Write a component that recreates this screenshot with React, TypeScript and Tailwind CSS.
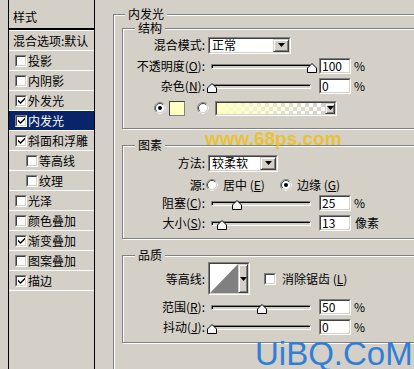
import type { ReactNode } from 'react'

const layers = [
  { label: '投影', checked: false },
  { label: '内阴影', checked: false },
  { label: '外发光', checked: true },
  { label: '内发光', checked: true, active: true },
  { label: '斜面和浮雕', checked: true },
  { label: '等高线', checked: false, sub: true },
  { label: '纹理', checked: false, sub: true },
  { label: '光泽', checked: false },
  { label: '颜色叠加', checked: false },
  { label: '渐变叠加', checked: true },
  { label: '图案叠加', checked: false },
  { label: '描边', checked: true },
]

function CheckBox({ checked }: { checked?: boolean }) {
  return (
    <span className="w-[12px] h-[12px] shrink-0 flex border border-t-[#808080] border-l-[#808080] border-r-white border-b-white">
      <span className="flex-1 flex items-center justify-center bg-white border border-t-[#404040] border-l-[#404040] border-r-[#d4d0c8] border-b-[#d4d0c8]">
        {checked && (
          <svg width="7" height="7" viewBox="0 0 7 7">
            <path d="M0 2.5 L2.5 5 L7 0.5 L7 2.5 L2.5 7 L0 4.5 Z" fill="#000" />
          </svg>
        )}
      </span>
    </span>
  )
}

function Radio({ on }: { on?: boolean }) {
  return (
    <svg width="12" height="12" viewBox="0 0 12 12" className="shrink-0">
      <circle cx="6" cy="6" r="5.5" fill="#fff" stroke="#808080" />
      <path d="M9.9 2.1A5.5 5.5 0 0 1 2.1 9.9" fill="none" stroke="#fff" />
      <path d="M2.8 9.2A4.5 4.5 0 0 1 9.2 2.8" fill="none" stroke="#404040" />
      <path d="M9.2 2.8A4.5 4.5 0 0 1 2.8 9.2" fill="none" stroke="#d4d0c8" />
      {on && <circle cx="6" cy="6" r="2" fill="#000" />}
    </svg>
  )
}

function Arrow() {
  return (
    <svg width="7" height="4" viewBox="0 0 7 4">
      <path d="M0 0 H7 L3.5 4 Z" fill="#000" />
    </svg>
  )
}

function Sunken({ className, children }: { className: string; children: ReactNode }) {
  return (
    <div className={`flex shrink-0 border border-t-[#808080] border-l-[#808080] border-r-white border-b-white ${className}`}>
      <div className="flex-1 flex bg-white border border-t-[#404040] border-l-[#404040] border-r-[#d4d0c8] border-b-[#d4d0c8]">
        {children}
      </div>
    </div>
  )
}

function DropBtn({ className }: { className: string }) {
  return (
    <span className={`h-full flex items-center justify-center bg-[#d4d0c8] border border-t-[#d4d0c8] border-l-[#d4d0c8] border-r-[#404040] border-b-[#404040] shadow-[inset_1px_1px_0_#fff,inset_-1px_-1px_0_#808080] ${className}`}>
      <Arrow />
    </span>
  )
}

function Select({ text, className }: { text: string; className: string }) {
  return (
    <Sunken className={`ml-[3px] h-[17px] ${className}`}>
      <span className="flex-1 flex items-center pl-[2px]">{text}</span>
      <DropBtn className="w-[16px]" />
    </Sunken>
  )
}

function Slider({ pos }: { pos: number }) {
  return (
    <div className="relative ml-[6px] w-[100px] h-[5px] shrink-0 border border-t-[#808080] border-l-[#808080] border-r-white border-b-white">
      <div className="h-full border-t border-l border-black bg-[#d4d0c8]" />
      <svg width="10" height="10" viewBox="0 0 10 10" className="absolute top-[-2px]" style={{ left: pos - 5.5 }}>
        <path d="M5 0.5 L9.5 5 V9.5 H0.5 V5 Z" fill="#f4f4f4" stroke="#000" />
      </svg>
    </div>
  )
}

function NumBox({ value }: { value: string }) {
  return (
    <Sunken className="ml-[8px] w-[32px] h-[16px]">
      <span className="flex-1 flex items-center pl-[1px]">{value}</span>
    </Sunken>
  )
}

function Label({ children }: { children: ReactNode }) {
  return <span className="w-[82px] shrink-0 text-right whitespace-nowrap">{children}</span>
}

function Group({ title, className, children }: { title: string; className: string; children: ReactNode }) {
  return (
    <div className={`relative shrink-0 border border-[#808080] shadow-[inset_1px_1px_0_#fff,1px_1px_0_#fff] ${className}`}>
      <span className="absolute left-[12px] top-[-7px] px-[3px] bg-[#d4d0c8] leading-[12px]">{title}</span>
      {children}
    </div>
  )
}

export default function App() {
  return (
    <div className="relative w-[414px] h-[369px] overflow-hidden bg-[#d4d0c8] text-black text-[12px] leading-none font-['Noto_Sans_CJK_SC',sans-serif] flex items-start">
      <aside className="ml-[8px] w-[87px] h-[369px] shrink-0 flex flex-col border-l border-r border-black">
        <div className="h-[30px] pt-[6px] pl-[4px] flex items-center border-b-2 border-black">样式</div>
        <div className="h-[21px] pl-[4px] flex items-center border-t border-b border-white whitespace-nowrap">混合选项:默认</div>
        {layers.map((l) => (
          <div
            key={l.label}
            className={`h-[20px] flex items-center border-b border-white ${l.sub ? 'pl-[17px]' : 'pl-[6px]'} ${l.active ? 'bg-[#0a246a] text-white' : ''}`}
          >
            <CheckBox checked={l.checked} />
            <span className="ml-[1px]">{l.label}</span>
          </div>
        ))}
      </aside>

      <div className="relative ml-[18px] mt-[14px] w-[340px] h-[400px] shrink-0 pl-[8px] pt-[13px] flex flex-col border border-[#808080] shadow-[inset_1px_1px_0_#fff,1px_1px_0_#fff]">
        <span className="absolute left-[11px] top-[-7px] px-[3px] bg-[#d4d0c8] leading-[12px]">内发光</span>

        <Group title="结构" className="w-[320px] h-[101px] pt-[7px]">
          <div className="h-[18px] flex items-center">
            <Label>混合模式:</Label>
            <Select text="正常" className="w-[83px]" />
          </div>
          <div className="mt-[3px] h-[18px] flex items-center">
            <Label>不透明度(<u>O</u>):</Label>
            <Slider pos={100} />
            <NumBox value="100" />
            <span className="ml-[3px]">%</span>
          </div>
          <div className="mt-[2px] h-[18px] flex items-center">
            <Label>杂色(<u>N</u>):</Label>
            <Slider pos={0} />
            <NumBox value="0" />
            <span className="ml-[3px]">%</span>
          </div>
          <div className="mt-[4px] h-[18px] flex items-center">
            <span className="ml-[31px]"><Radio on /></span>
            <span className="ml-[3px] w-[16px] h-[15px] bg-[#ffffc4] border border-t-[#404040] border-l-[#404040] border-r-[#808080] border-b-[#808080]" />
            <span className="ml-[12px]"><Radio /></span>
            <Sunken className="ml-[6px] w-[122px] h-[15px]">
              <svg width="106" height="11" className="flex-1 h-full">
                <defs>
                  <pattern id="chk" width="8" height="8" patternUnits="userSpaceOnUse">
                    <rect width="8" height="8" fill="#fff" />
                    <rect width="4" height="4" fill="#d0d0d0" />
                    <rect x="4" y="4" width="4" height="4" fill="#d0d0d0" />
                  </pattern>
                  <linearGradient id="fade" x1="0" x2="1" y1="0" y2="0">
                    <stop offset="0" stopColor="#ffffc4" stopOpacity="1" />
                    <stop offset="1" stopColor="#ffffc4" stopOpacity="0" />
                  </linearGradient>
                </defs>
                <rect width="100%" height="100%" fill="url(#chk)" />
                <rect width="100%" height="100%" fill="url(#fade)" />
              </svg>
              <DropBtn className="w-[10px]" />
            </Sunken>
          </div>
        </Group>

        <Group title="图素" className="mt-[16px] w-[320px] h-[94px] pt-[8px]">
          <div className="h-[18px] flex items-center">
            <Label>方法:</Label>
            <Select text="较柔软" className="w-[70px]" />
          </div>
          <div className="mt-[4px] h-[18px] flex items-center">
            <Label>源:</Label>
            <span className="ml-[1px] w-[74px] flex items-center">
              <Radio />
              <span className="ml-[5px]">居中 (<u>E</u>)</span>
            </span>
            <Radio on />
            <span className="ml-[5px]">边缘 (<u>G</u>)</span>
          </div>
          <div className="h-[18px] flex items-center">
            <Label>阻塞(<u>C</u>):</Label>
            <Slider pos={25} />
            <NumBox value="25" />
            <span className="ml-[3px]">%</span>
          </div>
          <div className="mt-[2px] h-[18px] flex items-center">
            <Label>大小(<u>S</u>):</Label>
            <Slider pos={10} />
            <NumBox value="13" />
            <span className="ml-[4px]">像素</span>
          </div>
        </Group>

        <Group title="品质" className="mt-[16px] w-[320px] h-[88px] pt-[6px]">
          <div className="h-[33px] flex items-center">
            <Label>等高线:</Label>
            <Sunken className="ml-[3px] w-[42px] h-[33px]">
              <svg width="28" height="29" viewBox="0 0 28 29" className="shrink-0">
                <rect width="28" height="29" fill="#fff" />
                <path d="M0 29 L28 0 L28 29 Z" fill="#808080" />
              </svg>
              <DropBtn className="w-[10px]" />
            </Sunken>
            <span className="ml-[14px]"><CheckBox /></span>
            <span className="ml-[6px]">消除锯齿 (<u>L</u>)</span>
          </div>
          <div className="mt-[3px] h-[18px] flex items-center">
            <Label>范围(<u>R</u>):</Label>
            <Slider pos={50} />
            <NumBox value="50" />
            <span className="ml-[3px]">%</span>
          </div>
          <div className="mt-[2px] h-[18px] flex items-center">
            <Label>抖动(<u>J</u>):</Label>
            <Slider pos={0} />
            <NumBox value="0" />
            <span className="ml-[3px]">%</span>
          </div>
        </Group>
      </div>

      <span className="absolute left-[205px] top-[129px] text-[19px] font-bold leading-none text-[#efbf10] opacity-80 font-['Liberation_Sans',sans-serif]">
        www.68ps.com
      </span>
      <span className="absolute left-[255px] top-[340px] text-[33px] leading-[28px] text-[#2f7fd8] font-['Liberation_Sans',sans-serif]">
        UiBQ.CoM
      </span>
    </div>
  )
}
